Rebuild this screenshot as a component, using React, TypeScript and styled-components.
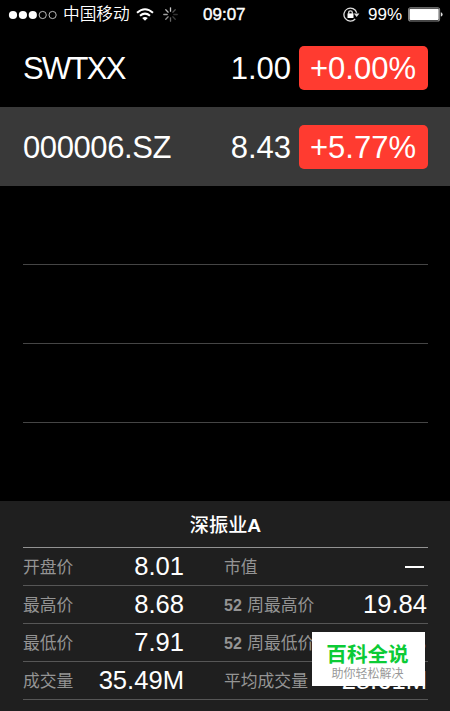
import React from "react";
import styled, { createGlobalStyle } from "styled-components";

const Global = createGlobalStyle`
  * { box-sizing: border-box; }
  html, body { margin: 0; background: #000; }
  body { font-family: "Liberation Sans", "Noto Sans CJK SC", sans-serif; color: #fff; overflow: hidden; }
`;

const Screen = styled.main`
  width: 450px;
  height: 711px;
  overflow: hidden;
  background: #000;
  display: flex;
  flex-direction: column;
`;

const StatusBar = styled.header`
  height: 29px;
  flex: none;
  display: grid;
  grid-template-columns: 203px 1fr auto;
  grid-template-rows: 29px;
  align-items: center;
  padding-right: 7px;
`;

const StatusGroup = styled.div`
  display: flex;
  align-items: center;
  svg { display: block; flex: none; }
`;

const Carrier = styled.span`
  font-size: 16.7px;
  font-weight: 350;
  line-height: 28px;
  padding-top: 1px;
  margin: 0 6px 0 5px;
  white-space: nowrap;
`;

const Clock = styled.span`
  font-size: 17px;
  line-height: 28px;
  padding-top: 1px;
  -webkit-text-stroke: 0.4px #fff;
`;

const Percent = styled.span`
  font-size: 17px;
  line-height: 28px;
  padding-top: 1px;
  margin: 0 6px 0 8px;
`;

const Quotes = styled.section`
  flex: none;
`;

const QuoteRow = styled.div<{ $selected?: boolean }>`
  height: ${(p) => (p.$selected ? 79 : 78)}px;
  padding: 0 22px 0 23px;
  display: flex;
  align-items: center;
  font-size: 31px;
  background: ${(p) => (p.$selected ? "#393939" : "#000")};
`;

const Fitted = styled.span<{ $spacing?: number }>`
  letter-spacing: ${(p) => p.$spacing ?? 0}px;
  white-space: nowrap;
`;

const QuoteText = styled(Fitted)`
  padding-top: 2px;
`;

const Price = styled(QuoteText)`
  margin-left: auto;
  margin-right: 8px;
`;

const Change = styled.div`
  width: 129px;
  height: 44px;
  border-radius: 5px;
  background: #ff3b30;
  display: flex;
  align-items: center;
  padding-left: 11px;
`;

const EmptyRow = styled.div<{ $last?: boolean }>`
  height: ${(p) => (p.$last ? 78 : 79)}px;
  margin: 0 22px 0 23px;
  border-bottom: ${(p) => (p.$last ? "none" : "1px solid #454545")};
`;

const Details = styled.section`
  flex: 1;
  min-height: 0;
  background: #1f1f1f;
  padding: 0 22px 0 23px;
  overflow: hidden;
`;

const Title = styled.h1`
  margin: 0;
  height: 47px;
  border-bottom: 1px solid #929292;
  text-align: center;
  font-size: 19.2px;
  font-weight: 500;
  line-height: 50px;
  b { font-weight: 700; }
`;

const StatRow = styled.div`
  height: 38px;
  border-bottom: 1px solid #565656;
  display: grid;
  grid-template-columns: 161px 1fr;
  column-gap: 40px;
`;

const Stat = styled.div`
  display: flex;
  align-items: center;
  justify-content: space-between;
  min-width: 0;
`;

const Label = styled.span`
  color: #949494;
  font-size: 16.8px;
  line-height: 34px;
  padding-top: 3px;
  white-space: nowrap;
  b { font-weight: 700; font-size: 16px; margin-right: 1px; }
`;

const Value = styled(Fitted)`
  font-size: 25.6px;
  line-height: 37px;
`;

const SecondValue = styled(Value)<{ $inset?: number }>`
  margin-right: ${(p) => p.$inset ?? 1}px;
`;

const Dash = styled.span`
  width: 19px;
  height: 2px;
  margin: 1px 4px 0 0;
  background: #fff;
`;

const Watermark = styled.aside`
  position: absolute;
  left: 312px;
  top: 632px;
  width: 113px;
  height: 54px;
  background: #fff;
  display: flex;
  flex-direction: column;
  align-items: center;
  padding-right: 2px;
`;

const Brand = styled.strong`
  color: #0ccb36;
  font-size: 20.6px;
  font-weight: 700;
  line-height: 22px;
  margin-top: 12px;
`;

const Slogan = styled.span`
  color: #999;
  font-size: 12px;
  line-height: 14px;
  margin-top: 1px;
`;

const SignalWrap = styled.div`
  margin-left: 8px;
`;

const SpinnerWrap = styled.div`
  margin-left: 9px;
`;

const Signal = () => (
  <svg width="50" height="12" viewBox="0 0 50 12">
    {[0, 1, 2, 3, 4].map((i) => (
      <circle key={i} cx={5 + i * 9.9} cy="6" r={i < 3 ? 4.1 : 3.6} fill={i < 3 ? "#fff" : "none"} stroke={i < 3 ? "none" : "#ccc"} strokeWidth="0.9" />
    ))}
  </svg>
);

const Wifi = () => (
  <svg width="18" height="13" viewBox="0 0 18 13" fill="none" stroke="#fff" strokeWidth="2">
    <path d="M1 4.8Q9-2.4 17 4.8M4 7.8Q9 3.4 14 7.8" />
    <path d="M6.2 10Q9 7.8 11.8 10L9 12.8Z" fill="#fff" stroke="none" />
  </svg>
);

const Spinner = () => (
  <svg width="15" height="15" viewBox="-7.5 -7.5 15 15">
    {[1, 0.4, 0.25, 0.3, 0.5, 0.7, 0.8, 0.9].map((o, i) => (
      <path key={i} d="M0-3.3V-6.7" stroke="#ccc" strokeWidth="1.3" strokeLinecap="round" opacity={o} transform={`rotate(${i * 45})`} />
    ))}
  </svg>
);

const RotationLock = () => (
  <svg width="17" height="15" viewBox="0 0 17 15" fill="none" stroke="#ddd" strokeWidth="1.3">
    <path d="M13.7 5.8A6.5 6.5 0 1 0 12.2 12" />
    <path d="M10.8 6.5H16.4L13.7 9.9Z" fill="#ddd" stroke="none" />
    <rect x="4.5" y="6.4" width="6" height="4.6" fill="#fff" stroke="none" />
    <path d="M5.7 7V5.5Q5.7 3.8 7.5 3.8T9.3 5.5V7" />
  </svg>
);

const Battery = () => (
  <svg width="35" height="15" viewBox="0 0 35 15">
    <rect x="0.6" y="0.8" width="31" height="13.2" rx="2" fill="none" stroke="#888" strokeWidth="1.1" />
    <rect x="1.5" y="1.7" width="29.2" height="11.4" rx="1" fill="#fff" />
    <path d="M32.8 5.2Q34.6 5.5 34.6 7.4T32.8 9.6Z" fill="#ddd" />
  </svg>
);

const quotes = [
  { symbol: "SWTXX", price: "1.00", change: "+0.00%", spacing: -1.7 },
  { symbol: "000006.SZ", price: "8.43", change: "+5.77%", spacing: -0.4, selected: true },
];

const stats = [
  { label: "开盘价", value: "8.01", second: "市值" },
  { label: "最高价", value: "8.68", second: "周最高价", weeks: true, secondValue: "19.84" },
  { label: "最低价", value: "7.91", second: "周最低价", weeks: true, secondValue: "7.43", inset: 2 },
  { label: "成交量", value: "35.49M", second: "平均成交量", secondValue: "28.61M" },
];

export default function App() {
  return (
    <Screen>
      <Global />
      <StatusBar>
        <StatusGroup>
          <SignalWrap><Signal /></SignalWrap>
          <Carrier>中国移动</Carrier>
          <Wifi />
          <SpinnerWrap><Spinner /></SpinnerWrap>
        </StatusGroup>
        <Clock>09:07</Clock>
        <StatusGroup>
          <RotationLock />
          <Percent>99%</Percent>
          <Battery />
        </StatusGroup>
      </StatusBar>
      <Quotes>
        {quotes.map((q) => (
          <QuoteRow key={q.symbol} $selected={q.selected}>
            <QuoteText $spacing={q.spacing}>{q.symbol}</QuoteText>
            <Price>{q.price}</Price>
            <Change><QuoteText>{q.change}</QuoteText></Change>
          </QuoteRow>
        ))}
        <EmptyRow />
        <EmptyRow />
        <EmptyRow />
        <EmptyRow $last />
      </Quotes>
      <Details>
        <Title>深振业<b>A</b></Title>
        {stats.map((s) => (
          <StatRow key={s.label}>
            <Stat><Label>{s.label}</Label><Value>{s.value}</Value></Stat>
            <Stat>
              <Label>{s.weeks && <b>52 </b>}{s.second}</Label>
              {s.secondValue ? <SecondValue $inset={s.inset}>{s.secondValue}</SecondValue> : <Dash />}
            </Stat>
          </StatRow>
        ))}
      </Details>
      <Watermark>
        <Brand>百科全说</Brand>
        <Slogan>助你轻松解决</Slogan>
      </Watermark>
    </Screen>
  );
}
